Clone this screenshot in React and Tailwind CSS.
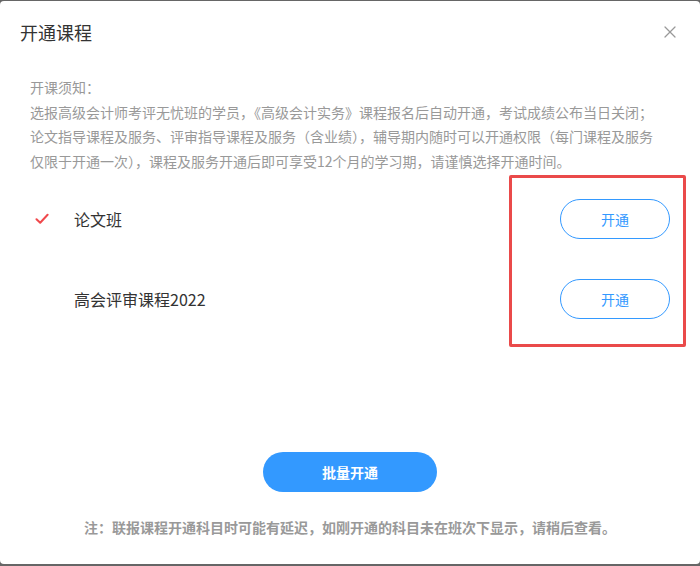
import React from 'react';
import { X } from 'lucide-react';

const courses = [
    { id: 1, name: '论文班', checked: true },
    { id: 2, name: '高会评审课程2022', checked: false },
];

const CheckMark = () => (
    <svg width="14" height="12" viewBox="0 0 14 12" fill="none">
        <path d="M1.5 6.2 L5.2 9.8 L12.6 1.8" stroke="#f0494c" strokeWidth="2" strokeLinecap="round" strokeLinejoin="round" />
    </svg>
);

const App = () => {
    return (
        <div className="w-[700px] h-[566px] bg-[#666666] pt-px pb-[2px]" style={{ fontFamily: '"Microsoft YaHei", "Noto Sans CJK SC", "Noto Sans", sans-serif' }}>
            <div className="relative h-full bg-white rounded-[4px] flex flex-col">
                {/* Header */}
                <div className="h-[62px] flex items-center justify-between pl-5 pr-[20px]">
                    <h1 className="text-[18px] text-[#333333]">开通课程</h1>
                    <X size={20} strokeWidth={1.5} className="text-[#999999]" />
                </div>

                {/* Notice */}
                <div className="px-[30px] pt-[12px] text-[14px] leading-[24.5px] text-[#999999]">
                    <p>开课须知：</p>
                    <p>
                        选报高级会计师考评无忧班的学员，《高级会计实务》课程报名后自动开通，考试成绩公布当日关闭；<br />
                        论文指导课程及服务、评审指导课程及服务（含业绩），辅导期内随时可以开通权限（每门课程及服务<br />
                        仅限于开通一次），课程及服务开通后即可享受12个月的学习期，请谨慎选择开通时间。
                    </p>
                </div>

                {/* Course list */}
                <div className="mt-[6px] pl-[35px] pr-[30px]">
                    {courses.map((c) => (
                        <div key={c.id} className="h-20 flex items-center">
                            <div className="w-[39px]">{c.checked && <CheckMark />}</div>
                            <span className="flex-1 text-[16px] text-[#333333]">{c.name}</span>
                            <button className="w-[110px] h-10 rounded-full border border-[#3399ff] text-[14px] text-[#3399ff] bg-white">
                                开通
                            </button>
                        </div>
                    ))}
                </div>

                {/* annotation box */}
                <div className="absolute left-[509px] top-[174px] w-[177px] h-[172px] border-[3px] border-[#ea4a4a] rounded-[2px]" />

                {/* Footer */}
                <div className="mt-[113px] flex justify-center">
                    <button className="w-[174px] h-10 rounded-full bg-[#3399ff] text-white text-[14px] font-bold">
                        批量开通
                    </button>
                </div>
                <p className="mt-[25px] text-center text-[14px] font-bold text-[#999999]">
                    注：联报课程开通科目时可能有延迟，如刚开通的科目未在班次下显示，请稍后查看。
                </p>
            </div>
        </div>
    );
};

export default App;
